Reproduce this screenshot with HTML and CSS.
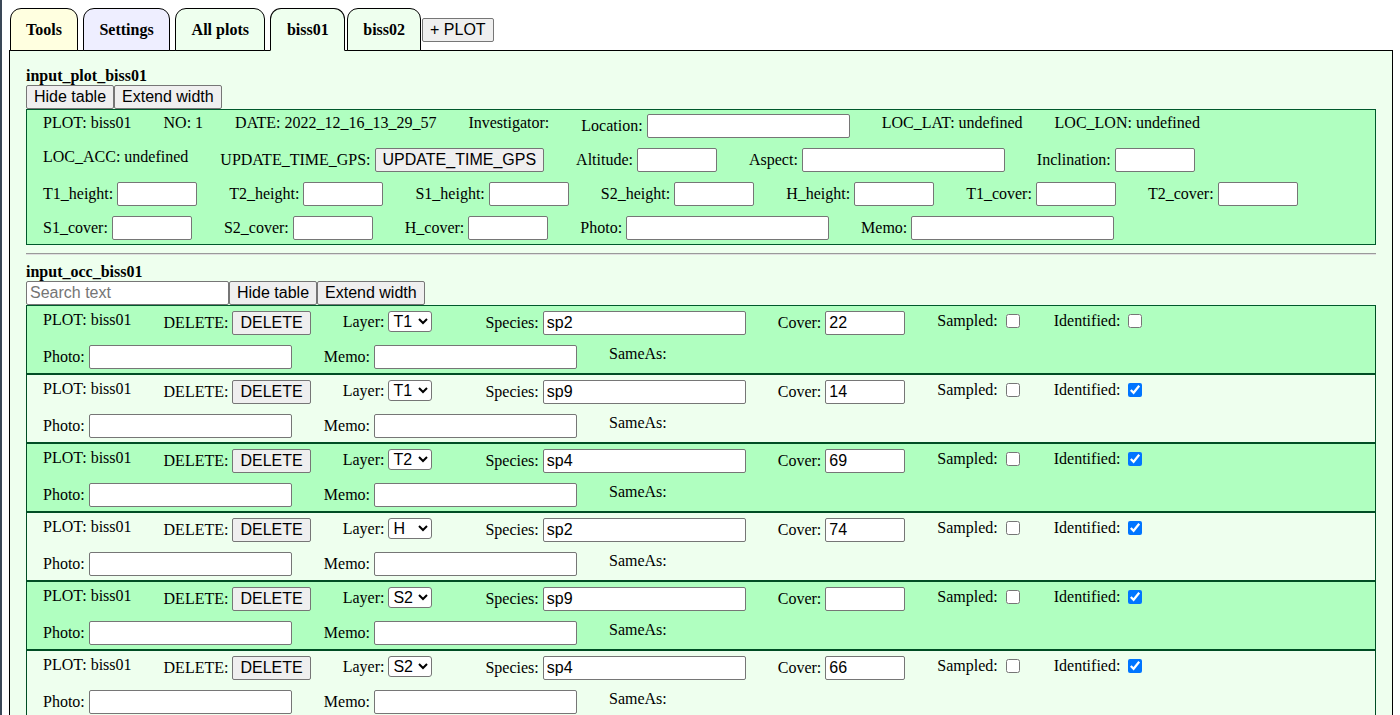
FILE: index.html
```html
<!DOCTYPE html>
<html lang="en">
<head>
<meta charset="utf-8">
<title>biss01</title>
<link rel="stylesheet" href="styles.css">
</head>
<body>
<div class="tabs">
  <div class="tab tab-tools">Tools</div>
  <div class="tab tab-settings">Settings</div>
  <div class="tab">All plots</div>
  <div class="tab active">biss01</div>
  <div class="tab tab-last">biss02</div>
  <button class="btn add-plot">+ PLOT</button>
</div>
<div class="panel">
  <div class="title">input_plot_biss01</div>
  <div class="toolbar"><button class="btn">Hide table</button><button class="btn">Extend width</button></div>
  <div class="plot-table fields">
    <div class="f">PLOT: biss01</div>
    <div class="f">NO: 1</div>
    <div class="f">DATE: 2022_12_16_13_29_57</div>
    <div class="f">Investigator:</div>
    <div class="f">Location: <input class="inp w-l" type="text"></div>
    <div class="f">LOC_LAT: undefined</div>
    <div class="f">LOC_LON: undefined</div>
    <div class="f">LOC_ACC: undefined</div>
    <div class="f">UPDATE_TIME_GPS: <button class="btn">UPDATE_TIME_GPS</button></div>
    <div class="f">Altitude: <input class="inp w-s" type="text"></div>
    <div class="f">Aspect: <input class="inp w-l" type="text"></div>
    <div class="f">Inclination: <input class="inp w-s" type="text"></div>
    <div class="f">T1_height: <input class="inp w-s" type="text"></div>
    <div class="f">T2_height: <input class="inp w-s" type="text"></div>
    <div class="f">S1_height: <input class="inp w-s" type="text"></div>
    <div class="f">S2_height: <input class="inp w-s" type="text"></div>
    <div class="f">H_height: <input class="inp w-s" type="text"></div>
    <div class="f">T1_cover: <input class="inp w-s" type="text"></div>
    <div class="f">T2_cover: <input class="inp w-s" type="text"></div>
    <div class="f">S1_cover: <input class="inp w-s" type="text"></div>
    <div class="f">S2_cover: <input class="inp w-s" type="text"></div>
    <div class="f">H_cover: <input class="inp w-s" type="text"></div>
    <div class="f">Photo: <input class="inp w-l" type="text"></div>
    <div class="f">Memo: <input class="inp w-l" type="text"></div>
  </div>
  <hr class="sep">
  <div class="title">input_occ_biss01</div>
  <div class="toolbar"><input class="inp w-l" type="text" placeholder="Search text"><button class="btn">Hide table</button><button class="btn">Extend width</button></div>
  <div class="occ-list">
    <div class="occ fields green">
      <div class="f">PLOT: biss01</div>
      <div class="f">DELETE: <button class="btn">DELETE</button></div>
      <div class="f">Layer: <select class="sel"><option selected>T1</option><option>T2</option><option>S1</option><option>S2</option><option>H</option></select></div>
      <div class="f">Species: <input class="inp w-l" type="text" value="sp2"></div>
      <div class="f">Cover: <input class="inp w-s" type="text" value="22"></div>
      <div class="f">Sampled: <input type="checkbox"></div>
      <div class="f">Identified: <input type="checkbox"></div>
      <div class="f">Photo: <input class="inp w-l" type="text"></div>
      <div class="f">Memo: <input class="inp w-l" type="text"></div>
      <div class="f">SameAs:</div>
    </div>
    <div class="occ fields">
      <div class="f">PLOT: biss01</div>
      <div class="f">DELETE: <button class="btn">DELETE</button></div>
      <div class="f">Layer: <select class="sel"><option selected>T1</option><option>T2</option><option>S1</option><option>S2</option><option>H</option></select></div>
      <div class="f">Species: <input class="inp w-l" type="text" value="sp9"></div>
      <div class="f">Cover: <input class="inp w-s" type="text" value="14"></div>
      <div class="f">Sampled: <input type="checkbox"></div>
      <div class="f">Identified: <input type="checkbox" checked></div>
      <div class="f">Photo: <input class="inp w-l" type="text"></div>
      <div class="f">Memo: <input class="inp w-l" type="text"></div>
      <div class="f">SameAs:</div>
    </div>
    <div class="occ fields green">
      <div class="f">PLOT: biss01</div>
      <div class="f">DELETE: <button class="btn">DELETE</button></div>
      <div class="f">Layer: <select class="sel"><option>T1</option><option selected>T2</option><option>S1</option><option>S2</option><option>H</option></select></div>
      <div class="f">Species: <input class="inp w-l" type="text" value="sp4"></div>
      <div class="f">Cover: <input class="inp w-s" type="text" value="69"></div>
      <div class="f">Sampled: <input type="checkbox"></div>
      <div class="f">Identified: <input type="checkbox" checked></div>
      <div class="f">Photo: <input class="inp w-l" type="text"></div>
      <div class="f">Memo: <input class="inp w-l" type="text"></div>
      <div class="f">SameAs:</div>
    </div>
    <div class="occ fields">
      <div class="f">PLOT: biss01</div>
      <div class="f">DELETE: <button class="btn">DELETE</button></div>
      <div class="f">Layer: <select class="sel"><option>T1</option><option>T2</option><option>S1</option><option>S2</option><option selected>H</option></select></div>
      <div class="f">Species: <input class="inp w-l" type="text" value="sp2"></div>
      <div class="f">Cover: <input class="inp w-s" type="text" value="74"></div>
      <div class="f">Sampled: <input type="checkbox"></div>
      <div class="f">Identified: <input type="checkbox" checked></div>
      <div class="f">Photo: <input class="inp w-l" type="text"></div>
      <div class="f">Memo: <input class="inp w-l" type="text"></div>
      <div class="f">SameAs:</div>
    </div>
    <div class="occ fields green">
      <div class="f">PLOT: biss01</div>
      <div class="f">DELETE: <button class="btn">DELETE</button></div>
      <div class="f">Layer: <select class="sel"><option>T1</option><option>T2</option><option>S1</option><option selected>S2</option><option>H</option></select></div>
      <div class="f">Species: <input class="inp w-l" type="text" value="sp9"></div>
      <div class="f">Cover: <input class="inp w-s" type="text"></div>
      <div class="f">Sampled: <input type="checkbox"></div>
      <div class="f">Identified: <input type="checkbox" checked></div>
      <div class="f">Photo: <input class="inp w-l" type="text"></div>
      <div class="f">Memo: <input class="inp w-l" type="text"></div>
      <div class="f">SameAs:</div>
    </div>
    <div class="occ fields">
      <div class="f">PLOT: biss01</div>
      <div class="f">DELETE: <button class="btn">DELETE</button></div>
      <div class="f">Layer: <select class="sel"><option>T1</option><option>T2</option><option>S1</option><option selected>S2</option><option>H</option></select></div>
      <div class="f">Species: <input class="inp w-l" type="text" value="sp4"></div>
      <div class="f">Cover: <input class="inp w-s" type="text" value="66"></div>
      <div class="f">Sampled: <input type="checkbox"></div>
      <div class="f">Identified: <input type="checkbox" checked></div>
      <div class="f">Photo: <input class="inp w-l" type="text"></div>
      <div class="f">Memo: <input class="inp w-l" type="text"></div>
      <div class="f">SameAs:</div>
    </div>
  </div>
</div>
</body>
</html>
```
FILE: styles.css
```css
html {
  background: #ffffff;
  border-left: 2px solid #3a4757;
  min-height: 100%;
}
body {
  margin: 8px 7px 8px 7px;
  font-family: "Liberation Serif", "Times New Roman", serif;
  font-size: 16px;
  color: #000;
}
.tabs {
  display: flex;
  align-items: flex-end;
  margin-left: 1px;
  margin-bottom: -1px;
  position: relative;
  z-index: 1;
}
.tab {
  height: 43px;
  box-sizing: border-box;
  border: 1px solid #000;
  border-radius: 11px 11px 0 0;
  padding: 0 15.5px;
  line-height: 41px;
  font-weight: bold;
  background: #eeffee;
  margin-right: 5px;
}
.tab-tools { background: #ffffe0; padding: 0 15px; }
.tab-settings { background: #eeeeff; }
.tab.active {
  border-bottom-color: #eeffee;
  margin-right: 2px;
}
.tab-last { margin-right: 1px; padding: 0 15px; }
.btn {
  font-family: "Liberation Sans", Arial, sans-serif;
  font-size: 16px;
  height: 24px;
  box-sizing: border-box;
  padding: 1px 7px;
  margin: 0;
  border: 1px solid #767676;
  border-radius: 2px;
  background: #efefef;
  color: #000;
  vertical-align: baseline;
}
.add-plot {
  margin-bottom: 9px;
}
.panel {
  border: 1px solid #000;
  background: #eeffee;
  padding: 16px;
  min-height: 700px;
}
.title {
  font-weight: bold;
}
.toolbar {
  display: flex;
}
.inp {
  font-family: "Liberation Sans", Arial, sans-serif;
  font-size: 16px;
  height: 24px;
  box-sizing: border-box;
  padding: 1px 3px;
  margin: 0;
  border: 1px solid #767676;
  border-radius: 2px;
  background: #fff;
  color: #000;
}
.inp::placeholder { color: #757575; }
.w-s { width: 80px; }
.w-l { width: 203px; }
.sel {
  font-family: "Liberation Sans", Arial, sans-serif;
  font-size: 16px;
  height: 21px;
  width: 44px;
  margin: 0 21px 0 0;
  border: 1px solid #767676;
  border-radius: 3px;
  background: #fff;
  color: #000;
  padding: 0;
}
.fields {
  display: flex;
  flex-wrap: wrap;
  align-items: flex-start;
  row-gap: 10px;
}
.f {
  padding: 0 16px;
  white-space: nowrap;
  min-height: 24px;
}
.plot-table {
  border: 1px solid #00592c;
  background: #b0ffc0;
  padding: 4px 0 4px;
}
.sep {
  margin: 8px 0;
  border: 0;
  border-top: 1px solid #9a9a9a;
  border-bottom: 1px solid #e0e0e0;
  height: 0;
}
.occ-list {
  border-top: 1px solid #00592c;
}
.occ {
  border: 1px solid #004d24;
  border-top: 0;
  border-bottom-width: 2px;
  padding: 5px 0 4px;
  row-gap: 10px;
}
.occ.green {
  background: #b0ffc0;
}
input[type="checkbox"] {
  margin: 3px 2px 3px 4px;
  width: 14px;
  height: 14px;
  vertical-align: -2px;
}
```
